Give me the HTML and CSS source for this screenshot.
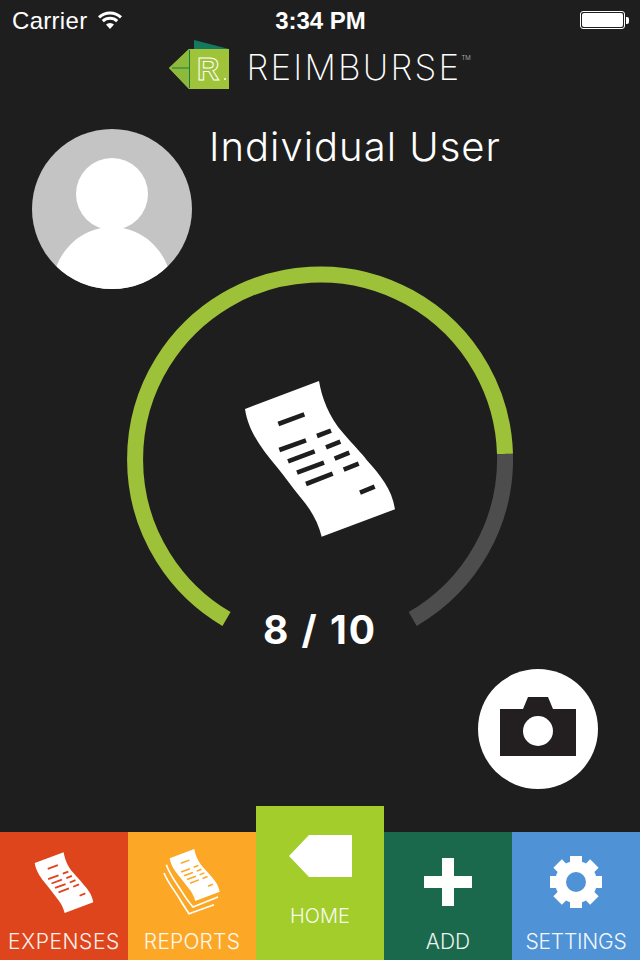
FILE: index.html
```html
<!DOCTYPE html>
<html lang="en">
<head>
  <meta charset="UTF-8" />
  <meta name="viewport" content="width=device-width, initial-scale=1.0" />
  <title>Reimburse</title>
  <link rel="stylesheet" href="styles.css">
</head>
<body>
  <!-- receipt shape, reused by the dial and the first two tabs -->
  <svg class="defs" width="0" height="0">
    <symbol id="receipt" viewBox="0 0 600 600">
      <path fill="#fff" d="M75 147 L297 63 C305 110 325 170 370 220 C400 255 425 280 440 300 C480 345 515 385 525 448 L305 530 C295 490 275 450 240 410 C215 380 195 350 170 320 C125 265 85 215 75 147 Z" />
      <path fill="none" stroke="currentColor" stroke-width="14" d="M175 192 L253 163 M291 228 L333 212 M178 270 L258 241 M318 262 L361 245 M204 304 L284 274 M344 296 L388 278 M231 338 L312 308 M371 329 L416 311 M258 372 L338 341 M420 398 L464 380" />
    </symbol>
  </svg>

  <div class="status-bar">
    <div class="status-left">
      <span class="carrier">Carrier</span>
      <svg class="wifi" width="24" height="18" viewBox="0 0 24 18">
        <path fill="#fff" d="M12 18 L8 13.6 A5.8 5.8 0 0 1 16 13.6 Z" />
        <path fill="none" stroke="#fff" stroke-width="3" d="M4.8 10.2 A10.5 10.5 0 0 1 19.2 10.2 M1 6.4 A16 16 0 0 1 23 6.4" />
      </svg>
    </div>
    <div class="status-time">3:34 PM</div>
    <div class="status-right">
      <div class="battery"><div class="battery-fill"></div></div>
      <div class="battery-tip"></div>
    </div>
  </div>

  <div class="logo-row">
    <svg class="logo-mark" width="60" height="49" viewBox="0 0 60 49">
      <path fill="#14795f" d="M25 0 L60 9 L60 20 L25 20 Z" />
      <path fill="#9fc43a" d="M0 28 L20 9 L60 9 L60 49 L20 49 Z" />
      <path fill="#8dba3b" d="M0 28 L20 9 L21 9 L21 49 L20 49 Z" />
      <path fill="none" stroke="#1c7a44" stroke-width="1" d="M20.5 10 V48 M3 28 H21" />
      <text class="logo-r" x="28" y="40">R</text>
      <circle cx="56" cy="39" r="1" fill="#fff" />
    </svg>
    <div class="logo-text">REIMBURSE<span class="logo-tm">TM</span></div>
  </div>

  <div class="profile">
    <svg class="avatar" width="160" height="160" viewBox="0 0 160 160">
      <rect width="160" height="160" fill="#c4c4c4" />
      <circle cx="80" cy="65" r="36" fill="#fff" />
      <ellipse cx="80" cy="161" rx="60" ry="63" fill="#fff" />
    </svg>
    <div class="user-name">Individual User</div>
  </div>

  <div class="dial">
    <svg class="dial-ring" width="386" height="366" viewBox="0 0 386 366">
      <path class="ring-done" d="M99.5 353 A185 185 0 1 1 378 188" />
      <path class="ring-left" d="M378 188 A185 185 0 0 1 285.7 353" />
    </svg>
    <svg class="dial-receipt" width="200" height="200"><use href="#receipt" /></svg>
    <div class="dial-count">8 / 10</div>
  </div>

  <div class="camera-row">
    <button class="camera-btn">
      <svg width="120" height="120" viewBox="0 0 120 120">
        <path fill="#231f20" d="M22 40 H45 L50 28 H70 L75 40 H98 V87 H22 Z" />
        <circle cx="60" cy="62" r="15" fill="#fff" />
      </svg>
    </button>
  </div>

  <div class="tabs">
    <div class="tab tab-expenses">
      <svg class="tab-icon" width="78" height="78"><use href="#receipt" /></svg>
      <span class="tab-label">EXPENSES</span>
    </div>
    <div class="tab tab-reports">
      <svg class="tab-icon" width="80" height="78" viewBox="472 124 240 234">
        <path fill="none" stroke="#fff" stroke-width="5" d="M500 195 C510 225 530 250 548 278 C558 295 570 310 580 322 L655 292" />
        <path fill="none" stroke="#fff" stroke-width="5" d="M493 220 C505 250 525 272 540 298 C550 315 560 330 568 342 L643 315" />
        <use href="#receipt" x="485" y="127" width="200" height="200" />
      </svg>
      <span class="tab-label">REPORTS</span>
    </div>
    <div class="tab tab-home">
      <svg class="tab-icon" width="64" height="43" viewBox="0 0 64 43">
        <path fill="#fff" d="M0 21 L20 0 H63 V42 H20 Z" />
      </svg>
      <span class="tab-label">HOME</span>
    </div>
    <div class="tab tab-add">
      <svg class="tab-icon" width="48" height="48" viewBox="0 0 48 48">
        <path fill="#fff" d="M18 0 H30 V18 H48 V30 H30 V48 H18 V30 H0 V18 H18 Z" />
      </svg>
      <span class="tab-label">ADD</span>
    </div>
    <div class="tab tab-settings">
      <svg class="tab-icon" width="52" height="52" viewBox="-26 -26 52 52">
        <circle r="21" fill="#fff" />
        <g fill="#fff">
          <rect x="-6" y="-26" width="12" height="52" />
          <rect x="-6" y="-26" width="12" height="52" transform="rotate(45)" />
          <rect x="-6" y="-26" width="12" height="52" transform="rotate(90)" />
          <rect x="-6" y="-26" width="12" height="52" transform="rotate(135)" />
        </g>
        <circle r="10" fill="#4f93d6" />
      </svg>
      <span class="tab-label">SETTINGS</span>
    </div>
  </div>
</body>
</html>
```

FILE: styles.css
```css
html, body {
  height: 100%;
}
body {
  margin: 0;
  background: #1e1e1e;
  color: #fff;
  font-family: "Inter", sans-serif;
  display: flex;
  flex-direction: column;
  overflow: hidden;
}
.defs {
  position: absolute;
}

/* status bar */
.status-bar {
  height: 40px;
  padding: 2px 11px 0 12px;
  box-sizing: border-box;
  display: grid;
  grid-template-columns: 1fr auto 1fr;
  align-items: center;
  font-family: "Liberation Sans", sans-serif;
  font-size: 24px;
  flex-shrink: 0;
}
.status-left {
  display: flex;
  align-items: center;
  gap: 11px;
}
.carrier {
  letter-spacing: 0.3px;
}
.wifi {
  margin-top: -3px;
}
.status-time {
  font-weight: 700;
}
.status-right {
  display: flex;
  align-items: center;
  justify-content: flex-end;
  margin-top: -2px;
}
.battery {
  width: 41px;
  height: 14px;
  padding: 1px;
  border: 1px solid #fff;
  border-radius: 3px;
}
.battery-fill {
  height: 100%;
  background: #fff;
  border-radius: 2px;
}
.battery-tip {
  width: 3px;
  height: 7px;
  margin-left: 1px;
  background: #fff;
  border-radius: 0 2px 2px 0;
}

/* logo */
.logo-row {
  height: 50px;
  display: flex;
  align-items: flex-start;
  justify-content: center;
  gap: 17px;
  flex-shrink: 0;
}
.logo-r {
  font-family: "Liberation Sans", sans-serif;
  font-weight: 700;
  font-size: 31px;
  fill: none;
  stroke: #fff;
  stroke-width: 1;
}
.logo-text {
  display: flex;
  align-items: flex-start;
  margin-top: 9px;
  font-size: 35px;
  line-height: 36px;
  font-weight: 200;
  letter-spacing: 2.2px;
}
.logo-tm {
  font-size: 6px;
  line-height: 18px;
  letter-spacing: 0;
}

/* profile */
.profile {
  height: 176px;
  padding: 39px 0 0 32px;
  box-sizing: border-box;
  display: flex;
  align-items: flex-start;
  gap: 17px;
  flex-shrink: 0;
}
.avatar {
  border-radius: 50%;
}
.user-name {
  margin-top: -5px;
  font-size: 40px;
  line-height: 46px;
  font-weight: 300;
  letter-spacing: 1px;
}

/* dial */
.dial {
  position: relative;
  width: 386px;
  height: 366px;
  margin-left: 127px;
  flex-shrink: 0;
}
.dial-ring {
  display: block;
}
.ring-done,
.ring-left {
  fill: none;
  stroke-width: 16;
}
.ring-done {
  stroke: #9dc138;
}
.ring-left {
  stroke: #4d4d4d;
}
.dial-receipt {
  position: absolute;
  left: 93px;
  top: 94px;
  color: #1e1e1e;
}
.dial-count {
  position: absolute;
  left: 0;
  right: 0;
  top: 340px;
  text-align: center;
  font-size: 39px;
  line-height: 48px;
  font-weight: 700;
  letter-spacing: 2px;
}

/* camera */
.camera-row {
  margin-top: 37px;
  padding-right: 42px;
  display: flex;
  justify-content: flex-end;
}
.camera-btn {
  width: 120px;
  height: 120px;
  padding: 0;
  border: none;
  border-radius: 50%;
  background: #fff;
}
.camera-btn svg {
  display: block;
}

/* tab bar */
.tabs {
  margin-top: auto;
  display: flex;
  align-items: flex-end;
  flex-shrink: 0;
}
.tab {
  position: relative;
  width: 128px;
  height: 128px;
  display: flex;
  flex-direction: column;
  align-items: center;
  box-sizing: border-box;
}
.tab-label {
  position: absolute;
  left: 0;
  right: 0;
  bottom: 5px;
  text-align: center;
  font-size: 21px;
  line-height: 26px;
  font-weight: 300;
  opacity: 0.92;
}
.tab-expenses {
  background: #df451c;
  color: #df451c;
  padding-top: 12px;
}
.tab-reports {
  background: #fca826;
  color: #fca826;
  padding-top: 9px;
  padding-left: 10px;
}
.tab-home {
  height: 154px;
  background: #a3cd2b;
  padding-top: 29px;
  padding-left: 1px;
}
.tab-add {
  background: #1a694d;
  padding-top: 26px;
}
.tab-settings {
  background: #4f93d6;
  padding-top: 24px;
}
.tab-expenses .tab-label,
.tab-reports .tab-label {
  color: #fff;
}
.tab-expenses .tab-label {
  letter-spacing: 0.6px;
}
.tab-reports .tab-label {
  letter-spacing: 0.2px;
}
.tab-settings .tab-label {
  letter-spacing: -0.25px;
}
.tab-home .tab-label {
  bottom: 31px;
  font-size: 20px;
}
```
